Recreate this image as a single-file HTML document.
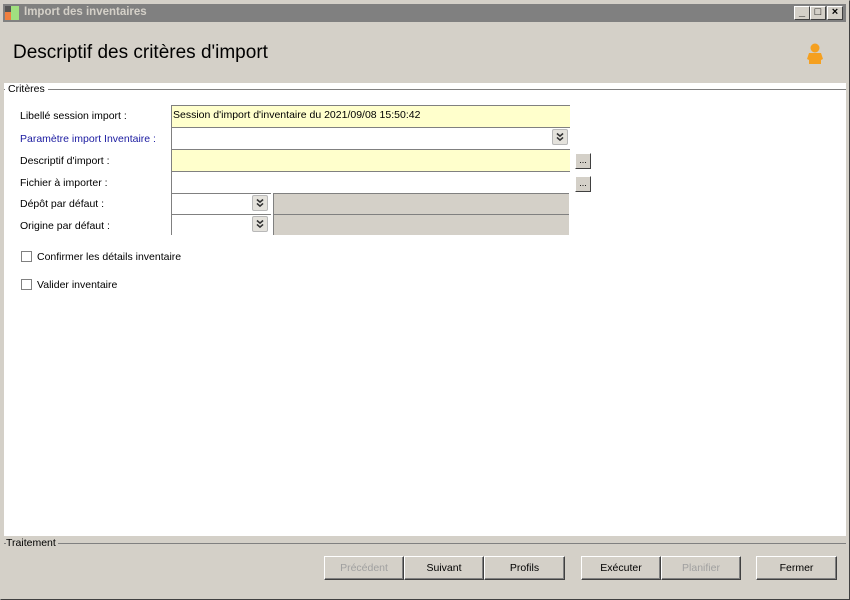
<!DOCTYPE html>
<html><head><meta charset="utf-8"><style>
*{margin:0;padding:0;box-sizing:border-box}
body{width:850px;height:600px;background:#d4d0c8;font-family:"Liberation Sans",sans-serif;font-size:10.5px;position:relative;overflow:hidden;color:#000}
.a{position:absolute;white-space:nowrap}
.tb{left:3px;top:4px;width:843px;height:18px;background:#808080}
.tt{left:24px;top:6px;color:#d4d0c8;font-weight:bold;font-size:11.5px}
.wb{width:16px;height:14px;top:6px;background:#d4d0c8;border:1px solid;border-color:#fff #404040 #404040 #fff;font-size:11px;line-height:11px;text-align:center;font-weight:bold}
.white{left:4px;top:83px;width:842px;height:453px;background:#fff}
.lbl{left:20px}
.f{left:171px;width:399px;height:22px;border-top:1px solid #808080;border-left:1px solid #808080;background:#fff}
.y{background:#ffffcc}
.dd{width:16px;height:16px;background:#e4e2dc;border:1px solid #b8b8b8;border-radius:2px}
.g{background:#d4d0c8}
.btn{top:556px;height:24px;background:#d4d0c8;border:1px solid;border-color:#fff #404040 #404040 #fff;box-shadow:inset -1px -1px #808080;text-align:center;line-height:22px;font-size:10.5px}
.dots{width:16px;height:16px;background:#d4d0c8;border:1px solid;border-color:#fff #404040 #404040 #fff;font-size:9px;text-align:center;line-height:12px}
.cb{left:21px;width:11px;height:11px;border:1px solid #808080;background:#fff}
</style></head><body>
<div class="a" style="left:0;top:0;width:850px;height:600px;border:1px solid #404040;border-top-color:#d4d0c8;border-left-color:#d4d0c8"></div>
<div class="a tb"></div>
<div class="a" style="left:5px;top:6px;width:6px;height:6px;background:#555"></div>
<div class="a" style="left:5px;top:12px;width:6px;height:8px;background:#f08040"></div>
<div class="a" style="left:11px;top:6px;width:8px;height:14px;background:#a0e080"></div>
<div class="a tt">Import des inventaires</div>
<div class="a wb" style="left:794px">_</div>
<div class="a wb" style="left:810px">□</div>
<div class="a wb" style="left:827px">×</div>
<div class="a" style="left:13px;top:42px;font-size:19px">Descriptif des critères d'import</div>
<svg class="a" style="left:806px;top:42px" width="18" height="24"><circle cx="9" cy="6" r="4.5" fill="#f5a020"/><path d="M3 11h12l2 6-2 1v4H3v-4l-2-1z" fill="#f5a020"/></svg>
<div class="a white"></div>
<div class="a" style="left:4px;top:89px;width:842px;height:1px;background:#808080"></div>
<div class="a" style="left:5px;top:83px;padding:0 3px;background:#fff;line-height:13px">Critères</div>
<div class="a lbl" style="top:110px">Libellé session import :</div>
<div class="a lbl" style="top:133px;color:#1a1aa0">Paramètre import Inventaire :</div>
<div class="a lbl" style="top:155px">Descriptif d'import :</div>
<div class="a lbl" style="top:177px">Fichier à importer :</div>
<div class="a lbl" style="top:198px">Dépôt par défaut :</div>
<div class="a lbl" style="top:220px">Origine par défaut :</div>
<div class="a f y" style="top:105px;padding:3px 0 0 1px">Session d'import d'inventaire du 2021/09/08 15:50:42</div>
<div class="a f" style="top:127px"></div>
<svg class="a dd" style="left:552px;top:129px" viewBox="0 0 16 16"><path d="M4.5 4l3.5 3 3.5-3M4.5 8.5l3.5 3 3.5-3" stroke="#333" stroke-width="1.8" fill="none"/></svg>
<div class="a f y" style="top:149px"></div>
<div class="a f" style="top:171px"></div>
<div class="a dots" style="left:575px;top:153px">...</div>
<div class="a dots" style="left:575px;top:176px">...</div>
<div class="a f" style="top:193px;width:100px;height:21px"></div>
<div class="a f g" style="top:193px;left:273px;width:296px;height:21px"></div>
<svg class="a dd" style="left:252px;top:195px" viewBox="0 0 16 16"><path d="M4.5 4l3.5 3 3.5-3M4.5 8.5l3.5 3 3.5-3" stroke="#333" stroke-width="1.8" fill="none"/></svg>
<div class="a f" style="top:214px;width:100px;height:21px"></div>
<div class="a f g" style="top:214px;left:273px;width:296px;height:21px"></div>
<svg class="a dd" style="left:252px;top:216px" viewBox="0 0 16 16"><path d="M4.5 4l3.5 3 3.5-3M4.5 8.5l3.5 3 3.5-3" stroke="#333" stroke-width="1.8" fill="none"/></svg>
<div class="a cb" style="top:251px"></div>
<div class="a" style="left:37px;top:251px">Confirmer les détails inventaire</div>
<div class="a cb" style="top:279px"></div>
<div class="a" style="left:37px;top:279px">Valider inventaire</div>
<div class="a" style="left:4px;top:543px;width:842px;height:1px;background:#808080"></div>
<div class="a" style="left:6px;top:537px;padding-right:2px;background:#d4d0c8">Traitement</div>
<div class="a btn" style="left:324px;width:80px;color:#a0a0a0">Précédent</div>
<div class="a btn" style="left:404px;width:80px">Suivant</div>
<div class="a btn" style="left:484px;width:81px">Profils</div>
<div class="a btn" style="left:581px;width:80px">Exécuter</div>
<div class="a btn" style="left:661px;width:80px;color:#a0a0a0">Planifier</div>
<div class="a btn" style="left:756px;width:81px">Fermer</div>
</body></html>
